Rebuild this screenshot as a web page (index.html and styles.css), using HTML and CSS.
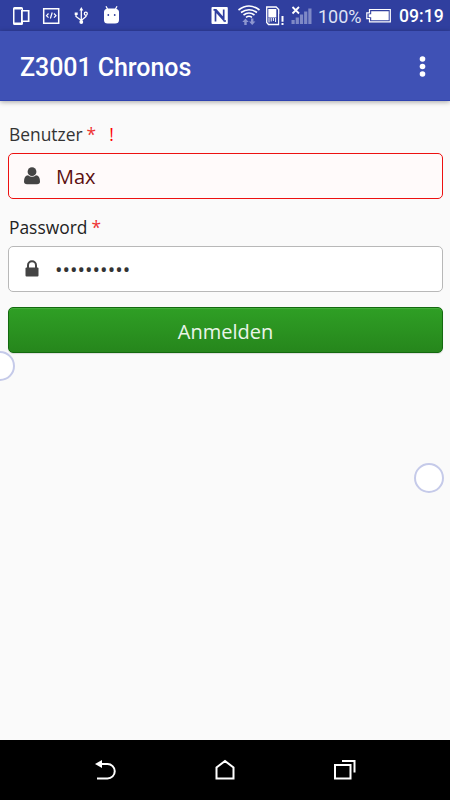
FILE: index.html
```html
<!DOCTYPE html>
<html lang="de">
<head>
<meta charset="utf-8">
<title>Z3001 Chronos</title>
<link rel="stylesheet" href="styles.css">
</head>
<body>
<div class="screen">
  <div class="status">
    <div class="notifications">
      <svg width="18" height="30" viewBox="12 0 18 30"><path fill="#fff" fill-rule="evenodd" d="M14.500 7h7q1.500 0 1.500 1.500V10h6.500v12H23v1.500q0 1.500-1.500 1.500h-7q-1.500 0-1.500-1.500v-15Q13 7 14.500 7zM14.500 9.500v13H21V10h1V9.500zM22.800 11.500v9h5v-9z"/></svg>
      <svg width="18" height="30" viewBox="42 0 18 30" fill="none" stroke="#fff"><path stroke-width="1.500" d="M43.700 8.700h15v14.600h-15z"/><path stroke-width="1.200" d="M48.500 13.500 46.500 15.700l2 2M54 13.500l2 2.200-2 2M52.200 12.500l-1.800 6"/></svg>
      <svg width="18" height="30" viewBox="72 0 18 30" fill="none" stroke="#fff" stroke-width="1.300"><path d="M81.300 9v13M76 14v2.500l5.300 4 4.700-4V15"/><circle cx="85.800" cy="13.700" r="1.500"/><path fill="#fff" stroke="none" d="M79.300 10.500 81.300 7l2 3.500zM74.700 12.500h3v2.500h-3z"/><circle cx="81.300" cy="22" r="1.900" fill="#fff" stroke="none"/></svg>
      <svg width="18" height="30" viewBox="102 0 18 30"><path fill="#fff" d="M104 12q0-3 3.500-3.500h7.500q4 .5 4 3.500v8q0 3.500-4 3.500h-7.500q-3.500 0-3.500-3.500z"/><path stroke="#fff" stroke-width="1.300" d="m107.500 9-1.500-2.700M115.500 9l1.500-2.700"/><circle cx="108.300" cy="15" r=".9" fill="#303f9f"/><circle cx="114.700" cy="15" r=".9" fill="#303f9f"/></svg>
    </div>
    <div class="system">
      <svg width="18" height="30" viewBox="211 0 18 30"><rect x="211.500" y="7" width="16.300" height="17" rx="1" fill="#fff"/><path fill="none" stroke="#303f9f" stroke-width="1.700" d="M215.500 21.500V11l8.200 9V9.500M213.500 9.800h2.500l7.500 8.500M223.500 21h2.500"/></svg>
      <svg width="24" height="30" viewBox="237 0 24 30"><g fill="none" stroke="#fff" stroke-width="1.600"><path d="M238.500 10q10.500-8 21 0M241 12.500q8-5.500 16 0M243.500 15q5.500-4 11 0M246 17.300q3-2 6 0"/></g><path fill="#8d96cf" d="m242.300 22 3.200-3.500 3.200 3.500h-2v3h-2.400v-3zM249 21.500h2v-3h2.400v3h2l-3.200 3.500z"/></svg>
      <svg width="20" height="30" viewBox="265 0 20 30"><path fill="none" stroke="#fff" stroke-width="1.300" d="M266.700 7h9.500l2.500 2.500v15h-10.200l-1.800-2z"/><path fill="#fff" d="M268.300 9h8v8.500h-8z"/><path fill="none" stroke="#fff" d="M269 18v4.500M271.200 18v3.500M273.400 18v3M275.600 18v4"/><path fill="#303f9f" d="M279.500 14h5v12h-5z"/><path fill="#fff" d="M281.500 16h2v5.800h-2zM281.500 23h2v2h-2z"/></svg>
      <svg width="22" height="30" viewBox="291 0 22 30"><path fill="#7f89c6" d="M291.500 20h3.200v4h-3.200zM295.700 17.500h3.200V24h-3.200zM299.900 14.500h3.200V24h-3.200zM304.100 11.500h3.200V24h-3.200zM308.300 8.500h3.200V24h-3.200z"/><path stroke="#fff" stroke-width="1.800" d="m292.500 7 6.500 6.500M299 7l-6.500 6.500"/></svg>
      <span class="percent">100%</span>
      <svg width="26" height="30" viewBox="366 0 26 30"><path fill="none" stroke="#fff" stroke-width="1.200" d="M369.500 9.500h20.800v12.400h-20.800V18.700h-2.700v-5.800h2.700z"/><path fill="#fff" d="M371.200 11.200h17.500v9h-17.500v-3h-2.500v-3h2.500z"/></svg>
      <span class="clock">09:19</span>
    </div>
  </div>
  <header class="appbar">
    <h1>Z3001 Chronos</h1>
    <svg class="more" width="8" height="24" viewBox="0 0 8 24" fill="#fff"><circle cx="4.500" cy="4" r="2.800"/><circle cx="4.500" cy="11.500" r="2.800"/><circle cx="4.500" cy="19" r="2.800"/></svg>
  </header>
  <main class="form">
    <div class="label">Benutzer<span class="required">*</span><span class="error">!</span></div>
    <div class="field invalid">
      <svg width="16" height="18" viewBox="0 0 16 18" fill="#444"><path d="M4 8.200Q0 8.500 0 14.500 0 17.200 3 17.200h10q3 0 3-2.700Q16 8.500 12 8.200 8 11.200 4 8.200z"/><circle cx="8" cy="4.700" r="4.400"/></svg>
      <span class="value">Max</span>
    </div>
    <div class="label second">Password<span class="required">*</span></div>
    <div class="field">
      <svg width="16" height="18" viewBox="0 0 16 18"><path fill="none" stroke="#444" stroke-width="2" d="M4 9V5.200a4 4 0 0 1 8 0V9"/><rect x="1.500" y="7.500" width="13" height="9" rx="1" fill="#444"/></svg>
      <span class="value dots">••••••••••</span>
    </div>
    <div class="submit">Anmelden</div>
  </main>
  <nav class="navbar">
    <svg width="24" height="24" viewBox="0 0 24 24" fill="none" stroke="#fff" stroke-width="2"><path d="M6 6h8.500a7 7 0 0 1 0 14.500H4"/><path fill="#fff" stroke="none" d="M2 6 9 2v8z"/></svg>
    <svg width="24" height="24" viewBox="0 0 24 24" fill="none" stroke="#fff" stroke-width="2"><path d="M3.500 20.500V9.500L12 3l8.500 6.500v11z"/></svg>
    <svg width="24" height="24" viewBox="0 0 24 24" fill="none" stroke="#fff" stroke-width="2"><path d="M2 7h15.500v13.500H2zM9 3h12.500v11.500"/></svg>
  </nav>
  <i class="handle handle-start"></i>
  <i class="handle handle-end"></i>
</div>
</body>
</html>
```

FILE: styles.css
```css
* { box-sizing: border-box; }
body { margin: 0; }
svg { display: block; flex: none; }
.screen {
  position: relative;
  width: 450px;
  height: 800px;
  overflow: hidden;
  display: flex;
  flex-direction: column;
  background: #fafafa;
  font-family: "Open Sans", sans-serif;
}
.status {
  height: 31px;
  flex: none;
  display: flex;
  justify-content: space-between;
  padding: 0 0 0 12px;
  background: #303f9f;
  color: #fff;
  font: 18px/33px Roboto, sans-serif;
}
.notifications { display: flex; gap: 12px; }
.system { display: flex; width: 239px; }
.system svg { margin-right: 8px; }
.system svg:nth-of-type(3) { margin-right: 6px; }
.system svg:nth-of-type(2) { margin-right: 4px; }
.system svg:nth-of-type(4) { margin-right: 5px; }
.system svg:nth-of-type(5) { margin-right: 7px; }
.percent { width: 48px; color: #dfe2f4; }
.clock { font-size: 17.6px; font-weight: 500; white-space: nowrap; }
.appbar {
  height: 70px;
  flex: none;
  display: flex;
  align-items: center;
  justify-content: space-between;
  padding: 3px 24px 0 20px;
  background: #3f51b5;
  border-bottom: 1px solid #2f43b0;
  box-shadow: 0 1px 5px rgba(0, 0, 0, .35);
  color: #fff;
}
.appbar h1 { margin: 0; padding-top: 1px; font: 500 25px/32px Roboto, sans-serif; letter-spacing: -.06px; }
.form { flex: 1; padding: 21px 7px 0 8px; }
.label {
  height: 24px;
  margin-bottom: 7px;
  padding-left: 1px;
  color: #333;
  font-size: 17.4px;
  line-height: 25px;
}
.label.second { margin-top: 16px; color: #222; }
.required { margin-left: 4px; color: #e33; }
.error { margin-left: 13px; color: #f00; }
.field {
  height: 46px;
  display: flex;
  align-items: center;
  padding-left: 15px;
  border: 1px solid #b8b8b8;
  border-radius: 5px;
  background: #fff;
  color: #333;
  font-size: 20px;
}
.invalid { border-color: #ed1010; background: #fffafa; color: #5c1010; }
.value { margin: 1px 0 0 16px; }
.dots { margin: 0 0 0 15px; }
.submit {
  height: 46px;
  margin-top: 15px;
  border: 1px solid #13690f;
  border-radius: 5px;
  background: linear-gradient(#2f9f25, #26861c);
  box-shadow: inset 0 1px #42ad38, 0 1px 1px rgba(0, 0, 0, .12);
  color: #eaf5e9;
  font-size: 20px;
  line-height: 47px;
  text-align: center;
}
.navbar {
  height: 60px;
  flex: none;
  display: flex;
  align-items: center;
  justify-content: center;
  gap: 96px;
  background: #000;
}
.handle {
  position: absolute;
  width: 30px;
  height: 30px;
  border: 2px solid #c5cae9;
  border-radius: 50%;
  background: #fff;
}
.handle-start { left: -15px; top: 351px; }
.handle-end { left: 414px; top: 463px; }
```
